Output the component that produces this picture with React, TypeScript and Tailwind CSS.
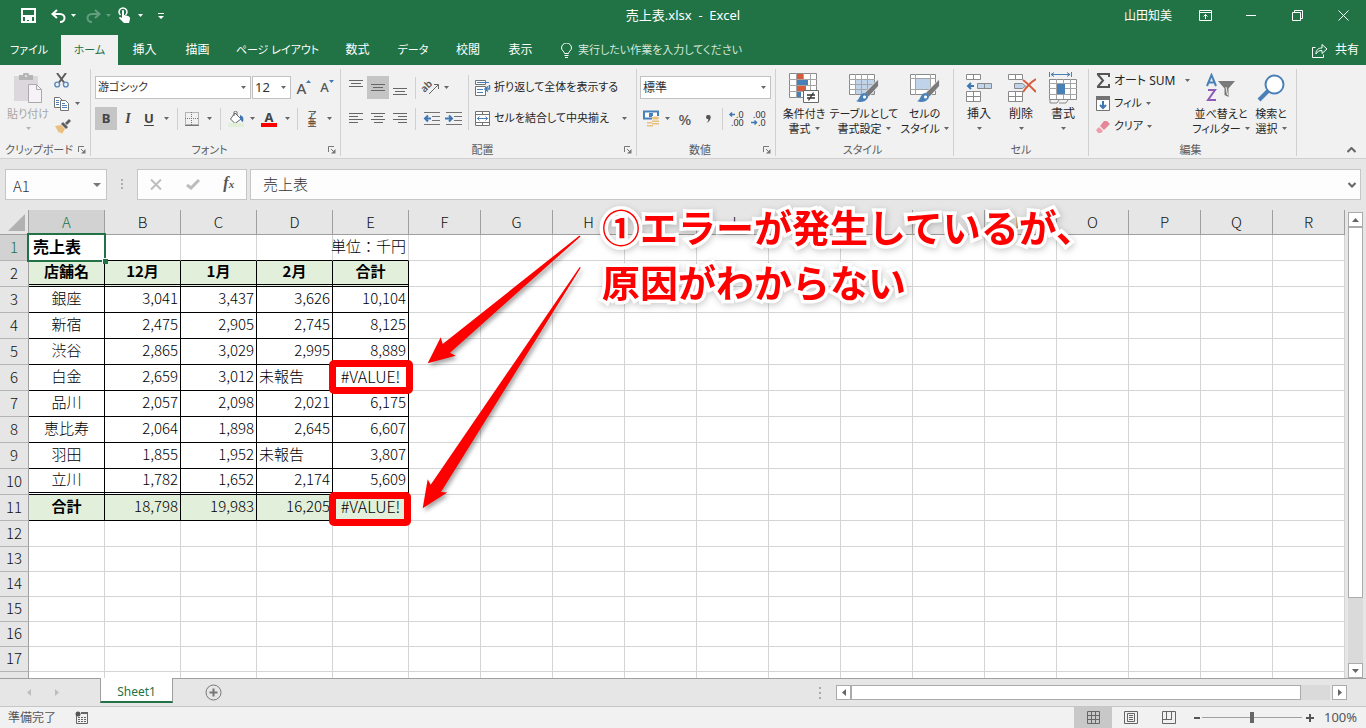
import type { ReactNode } from 'react'

const TABS = [
    { label: 'ファイル', cls: 'w-[58px] mr-[3px] text-[11px]' },
    { label: 'ホーム', cls: 'w-[57px] bg-[#f1f1f1] text-[11px] text-[#217346]' },
    { label: '挿入', cls: 'w-[53px]' },
    { label: '描画', cls: 'w-[53px]' },
    { label: 'ページ レイアウト', cls: 'w-[107px] text-[11px]' },
    { label: '数式', cls: 'w-[53px]' },
    { label: 'データ', cls: 'w-[58px] text-[11px]' },
    { label: '校閲', cls: 'w-[52px]' },
    { label: '表示', cls: 'w-[53px]' },
]

const COLUMNS = 'ABCDEFGHIJKLMNOPQR'.split('')

const SHEET: string[][] = [
    ['売上表', '', '', '', '単位：千円'],
    ['店舗名', '12月', '1月', '2月', '合計'],
    ['銀座', '3,041', '3,437', '3,626', '10,104'],
    ['新宿', '2,475', '2,905', '2,745', '8,125'],
    ['渋谷', '2,865', '3,029', '2,995', '8,889'],
    ['白金', '2,659', '3,012', '未報告', '#VALUE!'],
    ['品川', '2,057', '2,098', '2,021', '6,175'],
    ['恵比寿', '2,064', '1,898', '2,645', '6,607'],
    ['羽田', '1,855', '1,952', '未報告', '3,807'],
    ['立川', '1,782', '1,652', '2,174', '5,609'],
    ['合計', '18,798', '19,983', '16,205', '#VALUE!'],
]

const ROW_COUNT = 18

/* ---------- small shared parts ---------- */

function Caret({ className = 'text-[#666666]' }: { className?: string }) {
    return (
        <svg width="5" height="3" viewBox="0 0 5 3" className={`inline-block shrink-0 ${className}`}>
            <path d="M0 0h5L2.500 3z" fill="currentColor" />
        </svg>
    )
}

function Tool({ label, className, children }: { label: string; className: string; children: ReactNode }) {
    return (
        <button type="button" aria-label={label} className={`flex h-[23px] shrink-0 items-center justify-center ${className}`}>
            {children}
        </button>
    )
}

function Sep() {
    return <span className="mx-1 h-[22px] w-px shrink-0 bg-[#d0d0d0]" />
}

function Group({ label, className, launcher, children }: { label: string; className: string; launcher?: boolean; children: ReactNode }) {
    return (
        <section className={`flex h-[87px] shrink-0 flex-col border-r border-[#d0d0d0] ${className}`}>
            <div className="flex h-[75px] min-h-0">{children}</div>
            <div className="flex h-3 items-center pr-1 text-[#5c5c5c]">
                <span className="flex-1 whitespace-nowrap text-center text-[11px] leading-3">{label}</span>
                {launcher && (
                    <button type="button" aria-label={`${label}の設定`}>
                        <svg width="8" height="8" viewBox="0 0 8 8" fill="none" stroke="#777777">
                            <path d="M.5 6V.5H6M3 3l3 3" />
                            <path d="M7.5 3v4.5H3z" fill="#777777" stroke="none" />
                        </svg>
                    </button>
                )}
            </div>
        </section>
    )
}

function BigButton({ icon, lines, className, muted }: { icon: ReactNode; lines: string[]; className: string; muted?: boolean }) {
    return (
        <button type="button" className={`flex shrink-0 flex-col items-center whitespace-nowrap pt-1 leading-[15px] ${muted ? 'text-[#a6a6a6]' : 'text-[#262626]'} ${className}`}>
            <span className="mb-[3px] flex h-[30px] items-center">{icon}</span>
            <span>{lines[0]}</span>
            <span className="flex h-[15px] items-center gap-1">
                {lines[1]}
                <Caret className={muted ? 'text-[#b5b5b5]' : 'text-[#666666]'} />
            </span>
        </button>
    )
}

function PickBox({ label, value, className }: { label: string; value: string; className: string }) {
    return (
        <div className={`relative flex h-[23px] shrink-0 items-center border border-[#c2c2c2] bg-white ${className}`}>
            <select aria-label={label} className="h-full w-full appearance-none pl-[2px] text-[#333333]">
                <option>{value}</option>
            </select>
            <Caret className="pointer-events-none absolute right-1 top-[9px] text-[#666666]" />
        </div>
    )
}

/* ---------- icons ---------- */

function PasteIcon() {
    return (
        <svg width="28" height="30" viewBox="0 0 28 30">
            <path d="M0 3h24v25H0z" fill="#dbd7dc" />
            <path d="M5 2h4a3 3 0 0 1 6 0h4v5H5z" fill="#b5b5b5" />
            <circle cx="12" cy="3" r="1" fill="#f1f1f1" />
            <path d="M14.5 11.500h8l5 5v13h-13z" fill="#f6f2f8" stroke="#aaaaaa" />
            <path d="M22.500 11.500v5h5" fill="none" stroke="#aaaaaa" />
        </svg>
    )
}

function CutIcon() {
    return (
        <svg width="15" height="15" viewBox="0 0 15 15" fill="none">
            <path d="M3 0l7 9.500M12 0L5 9.500" stroke="#5c5c5c" strokeWidth="2" />
            <circle cx="3.200" cy="11.500" r="2.400" stroke="#5b8abb" strokeWidth="1.400" />
            <circle cx="11.800" cy="11.500" r="2.400" stroke="#5b8abb" strokeWidth="1.400" />
        </svg>
    )
}

function CopyIcon() {
    return (
        <svg width="16" height="14" viewBox="0 0 16 14" fill="#ffffff" stroke="#737373">
            <path d="M.5.5h5l3 3v7h-8z" />
            <path d="M6.500 3.500h5l3 3v7h-8z" />
            <path d="M2 3.500h3M2 5.500h3M2 7.500h3M8 6.500h3M8 8.500h5M8 10.500h5" stroke="#4a80b8" />
        </svg>
    )
}

function BrushIcon() {
    return (
        <svg width="16" height="15" viewBox="0 0 16 15">
            <path d="M0 7l6-1 4 4-3 5-2-2-1 1z" fill="#ecc07c" />
            <path d="M6 5l2-2 5 5-2 2z" fill="#5f5f5f" />
            <path d="M10 4l4-4 2 2-4 4z" fill="#5f5f5f" />
        </svg>
    )
}

function LinesIcon({ align }: { align: 'left' | 'center' | 'right' | 'top' | 'middle' | 'bottom' }) {
    const d = {
        left: 'M1 2.500h14M1 5.500h9M1 8.500h14M1 11.500h9',
        center: 'M1 2.500h14M4 5.500h9M1 8.500h14M4 11.500h9',
        right: 'M1 2.500h14M6 5.500h9M1 8.500h14M6 11.500h9',
        top: 'M1 .5h14M3 3.500h10M1 6.500h14',
        middle: 'M1 4.500h14M3 7.500h10M1 10.500h14',
        bottom: 'M1 8.500h14M3 11.500h10M1 14.500h14',
    }[align]
    return (
        <svg width="16" height="15" viewBox="0 0 16 15" stroke="#666666">
            <path d={d} />
        </svg>
    )
}

function IndentIcon({ out }: { out?: boolean }) {
    return (
        <svg width="17" height="14" viewBox="0 0 17 14" fill="none" stroke="#737373">
            <path d="M1 .5h16M9 4.500h8M9 8.500h8M1 12.500h16" />
            <path d={out ? 'M8 6.500H2M5 3.500l-3 3 3 3' : 'M0 6.500h6M4 3.500l3 3-3 3'} stroke="#3f77b5" strokeWidth="2" />
        </svg>
    )
}

function OrientIcon() {
    return (
        <svg width="17" height="15" viewBox="0 0 17 15" className="overflow-visible">
            <text x="-1" y="9" fontSize="10" fontWeight="600" fontFamily="Noto Sans" fill="#555555" transform="rotate(-45 5 8)">
                ab
            </text>
            <path d="M6 14l9-9M11 4.500h4.500V9" fill="none" stroke="#666666" />
        </svg>
    )
}

function WrapIcon() {
    return (
        <svg width="16" height="16" viewBox="0 0 16 16" fill="none" stroke="#737373" className="shrink-0">
            <path d="M.5.5h10v4H.5zM.5 6.500h10v9H.5z" fill="#ffffff" />
            <path d="M2 2.500h12M2 9.500h6M2 12.500h6" stroke="#4a80b8" />
            <path d="M14.500 5v4h-4M13 6.500l-3 2.500 3 2.500" stroke="#4a80b8" strokeWidth="1.500" />
        </svg>
    )
}

function MergeIcon() {
    return (
        <svg width="16" height="16" viewBox="0 0 16 16" fill="none" stroke="#737373" className="shrink-0">
            <path d="M.5.5h14v14H.5z" fill="#ffffff" />
            <path d="M0 3.500h15M0 11.500h15M7.500 0v3M7.500 12v3" />
            <path d="M2 7.500h11M4.500 5.500l-2 2 2 2M10.500 5.500l2 2-2 2" stroke="#4a80b8" />
        </svg>
    )
}

function BordersIcon() {
    return (
        <svg width="14" height="14" viewBox="0 0 14 14" fill="none" stroke="#777777">
            <path d="M.5.5h13v12H.5zM6.500 0v13M0 6.500h14" strokeDasharray="1 1" />
            <path d="M0 13.500h14" />
        </svg>
    )
}

function FillIcon() {
    return (
        <svg width="16" height="16" viewBox="0 0 16 16" fill="none">
            <path d="M7 2l6 6-6 4.500L2.500 8z" fill="#ffffff" stroke="#666666" />
            <path d="M6 5V1.500a1 1 0 0 1 3 0V4" stroke="#666666" />
            <path d="M12 4c3 1 4 3 3 7-1 0-2-2-3-3z" fill="#3f77b5" />
            <path d="M0 12h16v4H0z" fill="#e2efda" />
        </svg>
    )
}

function MoneyIcon() {
    return (
        <svg width="17" height="17" viewBox="0 0 17 17">
            <path d="M1 1.500h14v7H1z" fill="#ffffff" stroke="#4a80b8" strokeWidth="2" />
            <path d="M6 3h4v4H6z" fill="#4a80b8" />
            <path d="M9 6h7v10h-5v1H4v-6h5z" fill="#f1f1f1" />
            <g fill="#eac07e">
                <ellipse cx="12.500" cy="8" rx="3.500" ry="1.500" />
                <path d="M9 10.500h7v1.500H9zM9 13h7v1.500H9zM4 12h5v1.500H4zM4 15h6v1.500H4z" />
            </g>
        </svg>
    )
}

function DecimalIcon({ more }: { more?: boolean }) {
    return (
        <svg width="17" height="16" viewBox="0 0 17 16" fontFamily="Noto Sans" fontSize="9" fill="#333333" className="overflow-visible">
            <text x={more ? 7 : 2} y="7">{more ? '.0' : '.00'}</text>
            <text x={more ? 2 : 7} y="15">{more ? '.00' : '.0'}</text>
            <path d={more ? 'M6 3.500H1M3 1.500l-2 2 2 2' : 'M0 11.500h5M3.500 9.500l2 2-2 2'} fill="none" stroke="#3f77b5" strokeWidth="1.500" />
        </svg>
    )
}

function CondFormatIcon() {
    return (
        <svg width="30" height="30" viewBox="0 0 30 30">
            <path d="M.5.5h27v24H.5z" fill="#ffffff" stroke="#8a8a8a" />
            <path d="M7.500 0v25M14.500 0v25M21.500 0v25M0 6.500h28M0 12.500h28M0 18.500h28" stroke="#a5a5a5" />
            <path d="M8 1h6v5H8zM8 13h9v5H8z" fill="#d85b3d" />
            <path d="M8 7h11v5H8zM8 19h4v5H8z" fill="#4a80b8" />
            <path d="M14.500 17.500h15v12h-15z" fill="#ffffff" stroke="#6a6a6a" />
            <path d="M18 22h8M18 25h8M24.500 19.500l-5 8" stroke="#333333" strokeWidth="1.300" />
        </svg>
    )
}

function TableFormatIcon({ single }: { single?: boolean }) {
    return (
        <svg width="30" height="30" viewBox="0 0 30 30">
            <path d="M.5 1.500h25v20H.5z" fill="#ffffff" stroke="#8a8a8a" />
            {single ? (
                <>
                    <path d="M5.500 1v21M20.500 1v21M0 5.500h26M0 16.500h26" stroke="#a5a5a5" />
                    <path d="M6 6h14v10H6z" fill="#bfd3ea" />
                </>
            ) : (
                <>
                    <path d="M7 7h18v14H7z" fill="#bfd3ea" />
                    <path d="M6.500 1v21M12.500 1v21M18.500 1v21M0 6.500h26M0 11.500h26M0 16.500h26" stroke="#a5a5a5" />
                </>
            )}
            <path d="M29.500 6v7l-10 11-4-4z" fill="#7a7a7a" stroke="#f1f1f1" strokeWidth=".8" />
            <path d="M7 28c4-1 3-7 8-8 4 0 5 4 3 6-2 3-7 4-11 2z" fill="#4a80b8" />
            <path d="M14 24c0-2 3-2 3 0s-3 2-3 0z" fill="#ffffff" />
        </svg>
    )
}

function CellsIcon({ kind }: { kind: 'insert' | 'delete' }) {
    return (
        <svg width="30" height="28" viewBox="0 0 30 28" fill="#ffffff" stroke="#8a8a8a">
            <path d="M2.500.5h14v5h-14zM9.500.5v5" />
            <path d="M2.500 17.500h14v10h-14zM9.500 17.500v10M2.500 22.500h14" />
            {kind === 'insert' ? (
                <>
                    <path d="M13.500 9.500h14v5h-14zM20.500 9.500v5" fill="#c3d5ea" />
                    <path d="M10 12H4M7 9l-3 3 3 3" fill="none" stroke="#3f77b5" strokeWidth="2" />
                </>
            ) : (
                <>
                    <path d="M8.500 9.500h8l3 2.500-3 2.500h-8z" fill="#bfd3ea" />
                    <path d="M17 6c4 3 8 7 13 12M30 5c-5 3-9 7-13 13" fill="none" stroke="#d85b3d" strokeWidth="2" />
                </>
            )}
        </svg>
    )
}

function FormatIcon() {
    return (
        <svg width="28" height="32" viewBox="0 0 28 32" fill="none" stroke="#8a8a8a">
            <path d="M.5 7.500h27v20H.5z" fill="#ffffff" />
            <path d="M7.500 7v20M14.500 7v20M21.500 7v20M0 11.500h28M0 16.500h28M0 22.500h28" stroke="#a5a5a5" />
            <path d="M8 12h8v10H8z" fill="#4a80b8" stroke="none" />
            <path d="M1 28v3h7l2-3M10 31h7l2-3" />
            <path d="M.5 0v5M22.500 0v5M2 2.500h19M5 .5l-3 2 3 2M18 .5l3 2-3 2" stroke="#4a80b8" />
        </svg>
    )
}

function SortFilterIcon() {
    return (
        <svg width="30" height="30" viewBox="0 0 30 30">
            <g fill="none" strokeWidth="2">
                <path d="M1 13L5.500 2 10 13M3 9.500h5" stroke="#4a80b8" />
                <path d="M2 17h7L2 27h8" stroke="#8e5cb5" />
            </g>
            <path d="M12 8h17l-6.500 7.500V24l-4-2v-6.500z" fill="#7a7a7a" />
            <path d="M20 14l1.500 8" stroke="#f1f1f1" />
        </svg>
    )
}

function SearchIcon() {
    return (
        <svg width="28" height="28" viewBox="0 0 28 28" fill="none" stroke="#4a80b8">
            <path d="M2 26L11 17" strokeWidth="4" />
            <circle cx="17.500" cy="10.500" r="9" fill="#ffffff" strokeWidth="2" />
        </svg>
    )
}

/* ---------- header ---------- */

function TitleBar() {
    return (
        <header className="grid h-[35px] grid-cols-[1fr_auto_1fr] items-center pb-1 text-white">
            <div className="flex items-center pl-[21px]">
                <button type="button" aria-label="上書き保存" className="w-[30px]">
                    <svg width="15" height="15" viewBox="0 0 15 15" fill="none" stroke="#ffffff" strokeWidth="2">
                        <path d="M1 1h13v13H1zM1 8h13" />
                        <path d="M4 9h7v5H8v-2H6v2H4z" fill="#ffffff" stroke="none" />
                    </svg>
                </button>
                <button type="button" aria-label="元に戻す" className="flex w-[35px] items-center gap-[5px]">
                    <svg width="15" height="14" viewBox="0 0 15 14" fill="none" stroke="#ffffff" strokeWidth="2">
                        <path d="M6 1L1.500 5 6 9M2 5h7c6 0 6 8 0 8" />
                    </svg>
                    <Caret className="text-white" />
                </button>
                <button type="button" aria-label="やり直し" disabled className="flex w-[32px] items-center gap-[5px] opacity-30">
                    <svg width="15" height="14" viewBox="0 0 15 14" fill="none" stroke="#ffffff" strokeWidth="2">
                        <path d="M9 1l4.500 4L9 9M13 5H6c-6 0-6 8 0 8" />
                    </svg>
                    <Caret className="text-white" />
                </button>
                <button type="button" aria-label="タッチ/マウス モードの切り替え" className="flex w-[40px] items-center gap-2">
                    <svg width="12" height="17" viewBox="0 0 12 17">
                        <path d="M2.500 8a4 4 0 1 1 5 0" fill="none" stroke="#ffffff" strokeWidth="1.500" />
                        <path d="M4 4c0-1.500 2-1.500 2 0v4l4 1c1.500.5 2 1 2 3l-1 4H6L1 11c0-1.500 1.500-1.500 3 0z" fill="#ffffff" />
                    </svg>
                    <Caret className="text-white" />
                </button>
                <button type="button" aria-label="クイック アクセス ツール バーのカスタマイズ">
                    <svg width="6" height="6" viewBox="0 0 6 6" fill="#ffffff">
                        <path d="M0 0h6v1H0zM0 3h6L3 6z" />
                    </svg>
                </button>
            </div>
            <h1 className="whitespace-pre text-[13px]">売上表.xlsx  -  Excel</h1>
            <div className="flex items-center justify-end">
                <span className="mr-[10px]">山田知美</span>
                <button type="button" aria-label="リボンの表示オプション" className="flex w-[46px] justify-center">
                    <svg width="13" height="11" viewBox="0 0 13 11" fill="none" stroke="#ffffff">
                        <path d="M.5.5h12v10H.5zM0 2.500h13M6.500 9V4.500M4.500 6.500l2-2 2 2" />
                    </svg>
                </button>
                <button type="button" aria-label="最小化" className="flex w-[46px] justify-center">
                    <svg width="10" height="1" viewBox="0 0 10 1">
                        <path d="M0 0h10v1H0z" fill="#ffffff" />
                    </svg>
                </button>
                <button type="button" aria-label="元に戻す (縮小)" className="flex w-[46px] justify-center">
                    <svg width="11" height="11" viewBox="0 0 11 11" fill="none" stroke="#ffffff">
                        <path d="M.5 2.500h8v8h-8zM2.500 2V.5h8v8H9" />
                    </svg>
                </button>
                <button type="button" aria-label="閉じる" className="flex w-[46px] justify-center">
                    <svg width="11" height="11" viewBox="0 0 11 11" stroke="#ffffff">
                        <path d="M.5.5l10 10M10.500.5l-10 10" />
                    </svg>
                </button>
            </div>
        </header>
    )
}

function TabRow() {
    return (
        <nav className="flex h-[30px] items-stretch text-white">
            {TABS.map((t) => (
                <button key={t.label} type="button" className={`shrink-0 whitespace-nowrap text-center ${t.cls}`}>
                    {t.label}
                </button>
            ))}
            <label className="ml-[14px] flex w-[200px] items-center gap-[6px]">
                <svg width="11" height="15" viewBox="0 0 11 15" fill="none" stroke="#ffffff" className="shrink-0">
                    <path d="M3.500 10.500c0-2-3-3-3-5.500a5 5 0 0 1 10 0c0 2.500-3 3.500-3 5.500zM3.500 12.500h4M4 14.500h3" />
                </svg>
                <input className="w-full text-[11px] placeholder:text-[#d5e6dc]" placeholder="実行したい作業を入力してください" />
            </label>
            <button type="button" className="ml-auto mr-[7px] flex items-center gap-[7px]">
                <svg width="16" height="15" viewBox="0 0 16 15" fill="none" stroke="#ffffff">
                    <path d="M3.500 4.500h-3v10h11v-3M4 11c0-4 2-6 6-6V1.500L15 6l-5 4.500V7.500C7 7.500 5.500 8.500 4 11z" />
                </svg>
                共有
            </button>
        </nav>
    )
}

/* ---------- ribbon ---------- */

function Ribbon() {
    return (
        <div className="flex h-[94px] overflow-hidden border-b border-[#d0d0d0] bg-[#f1f1f1] pt-1">
            <Group label="クリップボード" className="w-[91px]" launcher>
                <BigButton muted className="w-[52px] pl-1 text-[11px]" icon={<PasteIcon />} lines={['貼り付け', '']} />
                <div className="flex flex-col">
                    <Tool label="切り取り" className="w-[19px]"><CutIcon /></Tool>
                    <Tool label="コピー" className="w-8 justify-start gap-[5px] pl-[2px]"><CopyIcon /><Caret /></Tool>
                    <Tool label="書式のコピー" className="w-[21px]"><BrushIcon /></Tool>
                </div>
            </Group>

            <Group label="フォント" className="w-[250px]" launcher>
                <div className="flex flex-col gap-2 pl-1 pt-[7px]">
                    <div className="flex gap-px">
                        <PickBox label="フォント名" value="游ゴシック" className="w-[156px] text-[11px]" />
                        <PickBox label="フォント サイズ" value="12" className="w-[39px] text-[13px]" />
                        <Tool label="フォント サイズの拡大" className="w-6 font-[Noto_Sans] text-[15px] font-medium text-[#555555]">
                            A<svg width="5" height="3" viewBox="0 0 5 3" className="mb-3"><path d="M0 3h5L2.500 0z" fill="#3f77b5" /></svg>
                        </Tool>
                        <Tool label="フォント サイズの縮小" className="w-5 font-[Noto_Sans] text-[13px] font-medium text-[#555555]">
                            A<svg width="5" height="3" viewBox="0 0 5 3" className="mb-3"><path d="M0 0h5L2.500 3z" fill="#3f77b5" /></svg>
                        </Tool>
                    </div>
                    <div className="flex items-center font-[Noto_Sans] text-[13px] text-[#444444]">
                        <Tool label="太字" className="w-[22px] bg-[#c5c5c5] font-bold">B</Tool>
                        <Tool label="斜体" className="w-[22px] font-[Liberation_Serif] text-sm font-bold italic">I</Tool>
                        <Tool label="下線" className="w-5 font-bold underline underline-offset-2">U</Tool>
                        <Tool label="下線の種類" className="w-[14px]"><Caret /></Tool>
                        <Sep />
                        <Tool label="罫線" className="w-5"><BordersIcon /></Tool>
                        <Tool label="罫線の種類" className="w-[14px]"><Caret /></Tool>
                        <Sep />
                        <Tool label="塗りつぶしの色" className="w-[22px]"><FillIcon /></Tool>
                        <Tool label="塗りつぶしの色の一覧" className="w-[10px]"><Caret /></Tool>
                        <Tool label="フォントの色" className="w-6">
                            <span className="flex h-4 w-4 items-center justify-center border-b-4 border-[#ff0000] text-[13px] font-bold leading-3">A</span>
                        </Tool>
                        <Tool label="フォントの色の一覧" className="w-3"><Caret /></Tool>
                        <Sep />
                        <Tool label="ふりがなの表示" className="w-5">
                            <span className="flex flex-col items-center font-[Noto_Sans_CJK_JP] text-[9px] font-medium leading-[8px]">
                                <span>ア</span>
                                <span>亜</span>
                            </span>
                        </Tool>
                        <Tool label="ふりがなの設定" className="w-[14px]"><Caret /></Tool>
                    </div>
                </div>
            </Group>

            <Group label="配置" className="w-[296px]" launcher>
                <div className="flex flex-col gap-2 pl-1 pt-[7px]">
                    <div className="flex items-center">
                        <Tool label="上揃え" className="w-[22px]"><LinesIcon align="top" /></Tool>
                        <Tool label="上下中央揃え" className="w-[22px] bg-[#c5c5c5]"><LinesIcon align="middle" /></Tool>
                        <Tool label="下揃え" className="w-[22px]"><LinesIcon align="bottom" /></Tool>
                        <Sep />
                        <Tool label="方向" className="w-[32px] gap-1"><OrientIcon /><Caret /></Tool>
                    </div>
                    <div className="flex items-center">
                        <Tool label="左揃え" className="w-[22px]"><LinesIcon align="left" /></Tool>
                        <Tool label="中央揃え" className="w-[22px]"><LinesIcon align="center" /></Tool>
                        <Tool label="右揃え" className="w-[22px]"><LinesIcon align="right" /></Tool>
                        <Sep />
                        <Tool label="インデントを減らす" className="w-[22px]"><IndentIcon out /></Tool>
                        <Tool label="インデントを増やす" className="w-[22px]"><IndentIcon /></Tool>
                    </div>
                </div>
                <div className="ml-1 mt-[6px] flex h-[55px] flex-1 flex-col gap-2 border-l border-[#d0d0d0] pl-[6px] pt-px text-[11px] text-[#262626]">
                    <button type="button" className="flex h-[23px] items-center gap-[3px] whitespace-nowrap">
                        <WrapIcon />
                        折り返して全体を表示する
                    </button>
                    <button type="button" className="flex h-[23px] items-center gap-[3px] whitespace-nowrap pr-[9px]">
                        <MergeIcon />
                        <span className="flex-1 text-left">セルを結合して中央揃え</span>
                        <Caret />
                    </button>
                </div>
            </Group>

            <Group label="数値" className="w-[139px]" launcher>
                <div className="flex flex-col gap-2 pl-[3px] pt-[7px]">
                    <PickBox label="表示形式" value="標準" className="w-[131px]" />
                    <div className="flex items-center font-[Noto_Sans] text-[#555555]">
                        <Tool label="通貨表示形式" className="w-[22px]"><MoneyIcon /></Tool>
                        <Tool label="通貨の種類" className="w-[10px]"><Caret /></Tool>
                        <Tool label="パーセント スタイル" className="w-[26px] text-[15px] font-medium leading-5">%</Tool>
                        <Tool label="桁区切りスタイル" className="w-5">
                            <svg width="5" height="8" viewBox="0 0 5 8"><path d="M0 2a2.300 2.300 0 1 1 4.700.5C4.500 5 3 7 .5 8 2 6.500 2.300 5.500 2.300 4.300 1 4.300 0 3.300 0 2z" fill="#555555" /></svg>
                        </Tool>
                        <Sep />
                        <Tool label="小数点以下の表示桁数を増やす" className="w-5"><DecimalIcon more /></Tool>
                        <Tool label="小数点以下の表示桁数を減らす" className="w-6"><DecimalIcon /></Tool>
                    </div>
                </div>
            </Group>

            <Group label="スタイル" className="w-[178px]">
                <BigButton className="w-[56px] text-[11px]" icon={<CondFormatIcon />} lines={['条件付き', '書式']} />
                <BigButton className="w-[64px] text-[11px]" icon={<TableFormatIcon />} lines={['テーブルとして', '書式設定']} />
                <BigButton className="w-[57px] text-[11px]" icon={<TableFormatIcon single />} lines={['セルの', 'スタイル']} />
            </Group>

            <Group label="セル" className="w-[135px] pl-1">
                <BigButton className="w-[42px]" icon={<CellsIcon kind="insert" />} lines={['挿入', '']} />
                <BigButton className="w-[42px]" icon={<CellsIcon kind="delete" />} lines={['削除', '']} />
                <BigButton className="w-[42px]" icon={<FormatIcon />} lines={['書式', '']} />
            </Group>

            <Group label="編集" className="w-[208px]">
                <div className="flex w-[104px] flex-col pl-[7px] text-[11px] text-[#262626]">
                    <button type="button" className="flex h-[23px] items-center gap-[3px] whitespace-nowrap text-xs">
                        <svg width="15" height="15" viewBox="0 0 15 15">
                            <path d="M1 1h12v3M1.500 1L7 7.500 1.500 14M1 14h12v-3" fill="none" stroke="#555555" strokeWidth="2" />
                        </svg>
                        <span className="w-[68px] text-left">オート SUM</span>
                        <Caret />
                    </button>
                    <button type="button" className="flex h-[23px] items-center gap-1 whitespace-nowrap">
                        <svg width="14" height="15" viewBox="0 0 14 15" fill="none">
                            <path d="M.5 1v13.500h13V1z" fill="#ffffff" stroke="#737373" />
                            <path d="M0 0h14v4H0z" fill="#737373" />
                            <path d="M7 5v7M4 9l3 3 3-3" stroke="#3f77b5" strokeWidth="2" />
                        </svg>
                        フィル
                        <Caret />
                    </button>
                    <button type="button" className="flex h-[23px] items-center gap-1 whitespace-nowrap">
                        <svg width="14" height="12" viewBox="0 0 14 12">
                            <path d="M8 0h3l3 3-6 6-4-4z" fill="#e58797" />
                            <path d="M3 6l4 4-2 2H2L0 9z" fill="#ee9fab" />
                        </svg>
                        クリア
                        <Caret />
                    </button>
                </div>
                <BigButton className="w-[56px] text-[11px]" icon={<SortFilterIcon />} lines={['並べ替えと', 'フィルター']} />
                <BigButton className="w-[44px] text-[11px]" icon={<SearchIcon />} lines={['検索と', '選択']} />
            </Group>

            <button type="button" aria-label="リボンを折りたたむ" className="ml-auto mr-[10px] self-end pb-[5px]">
                <svg width="9" height="6" viewBox="0 0 9 6" fill="none" stroke="#666666" strokeWidth="2">
                    <path d="M.5 5l4-4 4 4" />
                </svg>
            </button>
        </div>
    )
}

function FormulaBar() {
    return (
        <div className="flex h-[51px] items-start bg-[#e6e6e6] px-[5px] pt-[10px] font-['Noto_Sans_CJK_JP',sans-serif] text-[15px] font-light text-[#333333]">
            <div className="relative flex h-[31px] w-[102px] shrink-0 border border-[#c6c6c6] bg-[#fdfdfd]">
                <input aria-label="名前ボックス" defaultValue="A1" className="w-full pl-[7px] pt-[2px]" />
                <svg width="8" height="4" viewBox="0 0 8 4" className="absolute right-[5px] top-[13px]">
                    <path d="M0 0h8L4 4z" fill="#777777" />
                </svg>
            </div>
            <svg width="30" height="31" viewBox="0 0 30 31" fill="#b0b0b0" className="shrink-0">
                <path d="M14 10h2v2h-2zM14 14h2v2h-2zM14 18h2v2h-2z" />
            </svg>
            <div className="flex h-[31px] w-[110px] shrink-0 items-center justify-around border border-[#c6c6c6] bg-[#fdfdfd]">
                <button type="button" aria-label="キャンセル">
                    <svg width="12" height="11" viewBox="0 0 12 11" stroke="#bdbdbd" strokeWidth="2">
                        <path d="M1 .5l10 10M11 .5L1 10.500" />
                    </svg>
                </button>
                <button type="button" aria-label="入力">
                    <svg width="14" height="11" viewBox="0 0 14 11" fill="none" stroke="#bdbdbd" strokeWidth="3">
                        <path d="M1 6l4 3L13 1" />
                    </svg>
                </button>
                <button type="button" aria-label="関数の挿入" className="pb-[2px] font-[Liberation_Serif] text-base font-bold italic leading-4 text-[#555555]">
                    f<span className="text-[11px]">x</span>
                </button>
            </div>
            <div className="relative ml-[3px] flex h-[31px] flex-1 border border-[#c6c6c6] bg-[#fdfdfd]">
                <input aria-label="数式バー" defaultValue="売上表" className="w-full pb-[2px] pl-3" />
                <svg width="8" height="6" viewBox="0 0 8 6" fill="none" stroke="#666666" strokeWidth="2" className="absolute right-1 top-3">
                    <path d="M.5 1L4 4.500 7.500 1" />
                </svg>
            </div>
        </div>
    )
}

/* ---------- worksheet ---------- */

function cellClass(row: number, col: number) {
    const inTable = row >= 1 && row <= 10 && col <= 4
    const parts = ['border-r px-[2px] pb-[3px] whitespace-nowrap']

    if (inTable) {
        parts.push('border-black')
        parts.push(row === 1 || row === 9 ? 'border-b-3 [border-bottom-style:double]' : 'border-b')
        if (row === 1 || row === 10) parts.push('bg-[#e2efda]')
    } else {
        parts.push('border-b border-[#d4d4d4]')
        if (row === 0 && col <= 4) parts.push('border-b-black')
    }

    const value = SHEET[row]?.[col] ?? ''
    if (row === 0) {
        parts.push(col === 0 ? 'relative pl-1 text-left text-[16px] font-bold' : 'text-[15px]')
    } else if (row === 1 || (row === 10 && col === 0)) {
        parts.push('text-center text-[15px] font-bold')
    } else if (value.startsWith('#')) {
        parts.push('text-center text-[16px]')
    } else if (col === 0) {
        parts.push('text-center text-[15px]')
    } else if (value === '未報告') {
        parts.push('text-left text-[15px]')
    } else {
        parts.push('text-right text-[15px]')
    }
    return parts.join(' ')
}

function Grid() {
    return (
        <table className="w-[1345px] table-fixed border-separate border-spacing-0 bg-white font-light text-black">
            <colgroup>
                <col className="w-[29px]" />
                {COLUMNS.map((c, i) => (
                    <col key={c} className={i < 5 ? 'w-[76px]' : 'w-[72px]'} />
                ))}
            </colgroup>
            <thead>
                <tr className="h-[25px] bg-[#e6e6e6] text-[15px] leading-5">
                    <th aria-label="すべて選択" className="border-b border-r border-[#9f9f9f] p-0">
                        <svg width="17" height="17" viewBox="0 0 17 17" className="ml-2">
                            <path d="M17 0v17H0z" fill="#b1b1b1" />
                        </svg>
                    </th>
                    {COLUMNS.map((c, i) => (
                        <th
                            key={c}
                            scope="col"
                            className={`border-b border-r border-[#9f9f9f] p-0 font-light ${i === 0 ? 'bg-[#d2d2d2] text-[#217346]' : 'text-[#111111]'}`}
                        >
                            {c}
                        </th>
                    ))}
                </tr>
            </thead>
            <tbody>
                {Array.from({ length: ROW_COUNT }, (_, r) => (
                    <tr key={r} className={`leading-5 ${r < 12 ? 'h-[26px]' : 'h-[25px]'}`}>
                        <th
                            scope="row"
                            className={`border-b border-r border-b-[#b5b5b5] border-r-[#9f9f9f] p-0 pb-[2px] text-[15px] font-light ${r === 0 ? 'bg-[#d2d2d2] text-[#217346]' : 'bg-[#e6e6e6] text-[#111111]'}`}
                        >
                            {r + 1}
                        </th>
                        {COLUMNS.map((c, i) => (
                            <td key={c} className={cellClass(r, i)}>
                                {/* the unit note is wider than its column and spills to the left */}
                                {r === 0 && i === 4 ? <div className="flex justify-end">{SHEET[r][i]}</div> : SHEET[r]?.[i]}
                                {r === 0 && i === 0 && (
                                    <>
                                        <span className="absolute -inset-[2px] border-2 border-[#217346]" />
                                        <span className="absolute -bottom-1 -right-1 h-[6px] w-[6px] border-l border-t border-white bg-[#217346]" />
                                    </>
                                )}
                            </td>
                        ))}
                    </tr>
                ))}
            </tbody>
        </table>
    )
}

function Callouts() {
    return (
        <div className="pointer-events-none absolute inset-0">
            <div className="absolute left-[329px] top-[150px] h-[34px] w-[84px] rounded-[5px] border-7 border-[#ff0000]" />
            <div className="absolute left-[329px] top-[282px] h-[34px] w-[82px] rounded-[5px] border-7 border-[#ff0000]" />
            <svg width="180" height="310" viewBox="410 210 180 310" className="absolute left-[410px] top-0 drop-shadow-[2px_3px_2px_rgba(0,0,0,0.35)]" fill="#ff0000">
                <path d="M579.500 235.500l1 1L450 352.700l5.700 3L427.700 363.300l13-26 2 6.700z" />
                <path d="M579.700 267l1 .7L441 492l6.300.5-24.600 15.800 5-29 3 5.500z" />
            </svg>
            <p className="absolute left-[602px] top-[-12px] whitespace-nowrap text-[38px] font-bold leading-[55px] text-[#ff0000] [-webkit-text-stroke:7px_white] [paint-order:stroke_fill] [stroke-linejoin:round] drop-shadow-[1px_2px_3px_rgba(0,0,0,0.2)]">
                ①エラーが発生しているが、
                <br />
                原因がわからない
            </p>
        </div>
    )
}

function VerticalScroll() {
    return (
        <div className="flex w-[21px] shrink-0 flex-col items-center bg-[#e6e6e6] pt-[2px]">
            <button type="button" aria-label="上へスクロール" className="flex h-[15px] w-[15px] shrink-0 items-center justify-center border border-[#ababab] bg-white">
                <svg width="7" height="4" viewBox="0 0 7 4"><path d="M0 4h7L3.500 0z" fill="#666666" /></svg>
            </button>
            <div className="w-[15px] flex-1 bg-[#dadada]">
                <div className="h-[85%] border border-[#ababab] bg-white" />
            </div>
            <button type="button" aria-label="下へスクロール" className="flex h-[15px] w-[15px] shrink-0 items-center justify-center border border-[#ababab] bg-white">
                <svg width="7" height="4" viewBox="0 0 7 4"><path d="M0 0h7L3.500 4z" fill="#666666" /></svg>
            </button>
        </div>
    )
}

function SheetTabs() {
    return (
        <div className="flex h-[29px] shrink-0 items-start border-b border-[#c6c6c6] bg-[#e6e6e6]">
            <div className="flex h-[27px] w-[100px] items-center gap-6 border-t border-[#9f9f9f] pl-[27px]">
                <button type="button" aria-label="前のシート">
                    <svg width="4" height="7" viewBox="0 0 4 7"><path d="M4 0v7L0 3.500z" fill="#bdbdbd" /></svg>
                </button>
                <button type="button" aria-label="次のシート">
                    <svg width="4" height="7" viewBox="0 0 4 7"><path d="M0 0v7l4-3.500z" fill="#bdbdbd" /></svg>
                </button>
            </div>
            <button type="button" className="h-[25px] w-[73px] border-x border-b-2 border-x-[#9f9f9f] border-b-[#217346] bg-white pt-1 text-xs text-[#217346]">
                Sheet1
            </button>
            <div className="flex h-[28px] flex-1 items-center border-t border-[#9f9f9f] pl-8">
                <button type="button" aria-label="新しいシート">
                    <svg width="17" height="17" viewBox="0 0 17 17" fill="none" stroke="#777777">
                        <circle cx="8.500" cy="8.500" r="7.500" />
                        <path d="M8.500 4.500v8M4.500 8.500h8" strokeWidth="2" />
                    </svg>
                </button>
                <svg width="2" height="12" viewBox="0 0 2 12" fill="#aaaaaa" className="ml-auto mr-[15px]">
                    <path d="M0 0h2v2H0zM0 5h2v2H0zM0 10h2v2H0z" />
                </svg>
                <div className="flex h-[15px] w-[511px]">
                    <button type="button" aria-label="左へスクロール" className="flex w-[15px] items-center justify-center border border-[#ababab] bg-white">
                        <svg width="4" height="7" viewBox="0 0 4 7"><path d="M4 0v7L0 3.500z" fill="#666666" /></svg>
                    </button>
                    <div className="mr-[2px] flex-1 bg-[#dadada]">
                        <div className="h-full w-[94%] border border-[#ababab] bg-white" />
                    </div>
                    <button type="button" aria-label="右へスクロール" className="flex w-[15px] items-center justify-center border border-[#ababab] bg-white">
                        <svg width="4" height="7" viewBox="0 0 4 7"><path d="M0 0v7l4-3.500z" fill="#666666" /></svg>
                    </button>
                </div>
                <span className="w-[19px]" />
            </div>
        </div>
    )
}

function StatusBar() {
    return (
        <footer className="flex h-[21px] shrink-0 items-center bg-[#f1f1f1] text-[#555555]">
            <span className="pl-2">準備完了</span>
            <button type="button" aria-label="マクロの記録" className="ml-[19px]">
                <svg width="13" height="13" viewBox="0 0 13 13" fill="none" stroke="#666666">
                    <path d="M1.500 5v7.500h11V2M6 1.500h7M6 2.500h7" />
                    <path d="M3 6.500h8M3 8.500h8M3 10.500h8" strokeDasharray="2 1" />
                    <circle cx="3" cy="3" r="2.500" fill="#555555" stroke="none" />
                </svg>
            </button>
            <button type="button" aria-label="標準" className="ml-auto flex h-full w-[38px] items-center justify-center bg-[#c8c8c8]">
                <svg width="13" height="13" viewBox="0 0 13 13" fill="none" stroke="#666666">
                    <path d="M.5.5h12v12H.5zM4.500 0v13M8.500 0v13M0 4.500h13M0 8.500h13" />
                </svg>
            </button>
            <button type="button" aria-label="ページ レイアウト" className="flex w-[38px] justify-center">
                <svg width="14" height="13" viewBox="0 0 14 13" fill="none" stroke="#666666">
                    <path d="M.5.5h13v12H.5zM3.500 2.500h7v8h-7zM5 4.500h4M5 6.500h4M5 8.500h4" />
                </svg>
            </button>
            <button type="button" aria-label="改ページ プレビュー" className="flex w-[38px] justify-center">
                <svg width="14" height="13" viewBox="0 0 14 13" fill="none" stroke="#666666">
                    <path d="M.5.5h13v12H.5zM4.500 0v8M9.500 0v8M0 8.500h10" />
                </svg>
            </button>
            <button type="button" aria-label="縮小" className="ml-[3px] flex w-[11px] justify-center">
                <svg width="6" height="2" viewBox="0 0 6 2"><path d="M0 0h6v2H0z" fill="#555555" /></svg>
            </button>
            <input
                type="range"
                aria-label="ズーム"
                min={10}
                max={190}
                defaultValue={100}
                className="h-[21px] w-[100px] appearance-none bg-transparent [&::-webkit-slider-runnable-track]:h-px [&::-webkit-slider-runnable-track]:bg-[#a0a0a0] [&::-webkit-slider-thumb]:-mt-[5px] [&::-webkit-slider-thumb]:h-[11px] [&::-webkit-slider-thumb]:w-1 [&::-webkit-slider-thumb]:appearance-none [&::-webkit-slider-thumb]:bg-[#666666]"
            />
            <button type="button" aria-label="拡大" className="flex w-[15px] justify-center">
                <svg width="8" height="8" viewBox="0 0 8 8"><path d="M3 0h2v3h3v2H5v3H3V5H0V3h3z" fill="#555555" /></svg>
            </button>
            <button type="button" className="ml-[7px] mr-2 w-[34px] text-left text-[13px]">100%</button>
        </footer>
    )
}

export default function App() {
    return (
        <div className="flex h-screen flex-col overflow-hidden bg-[#e6e6e6] font-['Noto_Sans','Noto_Sans_CJK_JP',sans-serif] text-xs [font-feature-settings:'palt']">
            <div className="shrink-0 bg-[#217346]">
                <TitleBar />
                <TabRow />
            </div>
            <Ribbon />
            <FormulaBar />
            <main className="relative flex min-h-0 flex-1 font-['Noto_Sans_CJK_JP',sans-serif] [font-feature-settings:normal]">
                <div className="min-w-0 flex-1 overflow-hidden">
                    <Grid />
                </div>
                <VerticalScroll />
                <Callouts />
            </main>
            <SheetTabs />
            <StatusBar />
        </div>
    )
}
